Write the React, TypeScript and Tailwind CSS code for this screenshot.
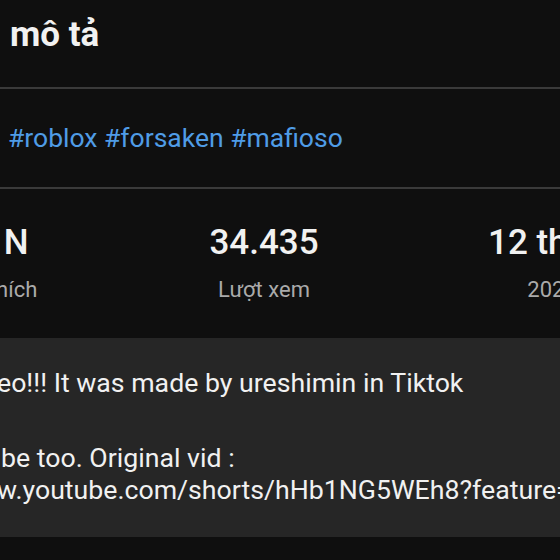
export default function App() {
  return (
    <div className="w-[560px] h-[560px] overflow-hidden bg-[#0f0f0f] font-['Roboto',sans-serif] text-[#f1f1f1]">
      {/* tiêu đề */}
      <div className="pt-[15px] pb-[32px] pl-[10px]">
        <h2 className="text-[35px] leading-[40px] font-bold">mô tả</h2>
      </div>
      <div className="h-[2px] bg-[#3a3a3a]" />

      {/* hashtag */}
      <div className="py-[33px] pl-[8px]">
        <p className="text-[26.5px] leading-[32px] text-[#4f9ce6] whitespace-nowrap">
          #roblox #forsaken #mafioso
        </p>
      </div>
      <div className="h-[2px] bg-[#3a3a3a]" />

      {/* thống kê */}
      <div className="grid grid-cols-[276px_276px_300px] -ml-[150px] pt-[34px] h-[149px] text-center whitespace-nowrap">
        <Stat value="1,2 N" label="Lượt thích" />
        <Stat value="34.435" label="Lượt xem" />
        <Stat value="12 thg 3" label="2025" />
      </div>

      {/* nội dung mô tả */}
      <div className="bg-[#262626] pt-[29px] pb-[31px] text-[26.7px] leading-[32px] whitespace-nowrap overflow-hidden">
        <p className="-ml-[3px]">eo!!! It was made by ureshimin in Tiktok</p>
        <p className="mt-[43px] ml-[1px]">be too. Original vid :</p>
        <p className="-ml-[3px]">w.youtube.com/shorts/hHb1NG5WEh8?feature=share</p>
      </div>
    </div>
  );
}

function Stat({ value, label }: { value: string; label: string }) {
  return (
    <div className="flex flex-col items-center">
      <span className="text-[35px] leading-[40px] font-medium">{value}</span>
      <span className="mt-[13px] text-[22px] leading-[28px] text-[#aaaaaa]">{label}</span>
    </div>
  );
}
